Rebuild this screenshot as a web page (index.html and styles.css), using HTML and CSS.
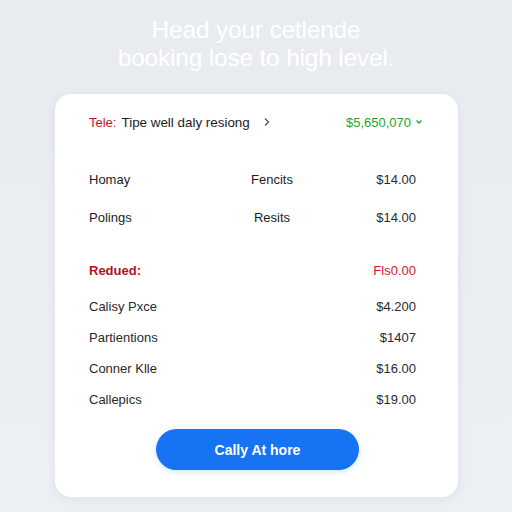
FILE: index.html
```html
<!DOCTYPE html>
<html>
<head>
<meta charset="utf-8">
<link rel="stylesheet" href="styles.css">
</head>
<body>
<div class="page">
  <h1 class="title">Head your cetlende<br>booking lose to high level.</h1>
  <div class="card">
    <div class="head">
      <div class="head-left">
        <span class="tag">Tele:</span>
        <span class="head-text">Tipe well daly resiong</span>
        <svg class="chev" width="8" height="10" viewBox="0 0 8 10"><path d="M2 1.5 L5.5 5 L2 8.5" fill="none" stroke="#555" stroke-width="1.3"/></svg>
      </div>
      <div class="head-right">
        <span class="total">$5,650,070</span>
        <svg class="down" width="8" height="6" viewBox="0 0 8 6"><path d="M1.5 1.5 L4 4 L6.5 1.5" fill="none" stroke="#22a52a" stroke-width="1.3"/></svg>
      </div>
    </div>
    <div class="grid-row"><span>Homay</span><span class="mid">Fencits</span><span class="amt">$14.00</span></div>
    <div class="grid-row"><span>Polings</span><span class="mid">Resits</span><span class="amt">$14.00</span></div>
    <div class="reduced"><span class="red-label">Redued:</span><span class="red-amt">Fls0.00</span></div>
    <div class="list">
      <div class="item"><span>Calisy Pxce</span><span class="amt">$4.200</span></div>
      <div class="item"><span>Partientions</span><span class="amt">$1407</span></div>
      <div class="item"><span>Conner Klle</span><span class="amt">$16.00</span></div>
      <div class="item"><span>Callepics</span><span class="amt">$19.00</span></div>
    </div>
    <div class="actions"><button class="btn">Cally At hore</button></div>
  </div>
</div>
</body>
</html>
```

FILE: styles.css
```css
* { box-sizing: border-box; }
html, body { margin: 0; padding: 0; }
body {
  width: 512px;
  height: 512px;
  background: linear-gradient(180deg, #e8ecf0 0%, #eceff3 100%);
  font-family: "Liberation Sans", Arial, sans-serif;
  color: #1c1c1c;
  overflow: hidden;
}
.page {
  display: flex;
  flex-direction: column;
  align-items: center;
  padding-top: 16px;
}
.title {
  margin: 0;
  font-weight: 400;
  font-size: 24.5px;
  line-height: 28px;
  color: #ffffff;
  text-align: center;
  letter-spacing: -0.2px;
}
.card {
  margin-top: 22px;
  width: 403px;
  margin-left: 1px;
  background: #ffffff;
  border-radius: 16px;
  box-shadow: 0 2px 10px rgba(120, 130, 145, 0.12);
  padding: 16px 35px 27px 34px;
  display: flex;
  flex-direction: column;
}
.head {
  height: 24px;
  display: flex;
  align-items: center;
  justify-content: space-between;
  font-size: 13px;
}
.head-left { display: flex; align-items: center; }
.tag { color: #c0182c; margin-right: 5px; }
.head-text { color: #1c1c1c; font-size: 13.4px; }
.chev { margin-left: 13px; }
.head-right { display: flex; align-items: center; padding-left: 2px; }
.total { color: #22a52a; }
.down { margin-left: 4px; }
.grid-row {
  height: 38px;
  display: grid;
  grid-template-columns: 143px 80px 1fr;
  align-items: center;
  font-size: 13px;
  padding-right: 7px;
}
.head + .grid-row { margin-top: 26px; }
.mid { text-align: center; }
.amt { text-align: right; color: #2a2a2a; }
.reduced {
  margin-top: 15px;
  height: 38px;
  display: flex;
  align-items: center;
  justify-content: space-between;
  font-size: 13px;
  padding-right: 7px;
}
.red-label { color: #b5111f; font-weight: 700; }
.red-amt { color: #d0192e; }
.list { margin-top: 2px; display: flex; flex-direction: column; }
.item {
  height: 31px;
  display: flex;
  align-items: center;
  justify-content: space-between;
  font-size: 13px;
  color: #2a2a2a;
  padding-right: 7px;
}
.actions {
  margin-top: 14px;
  display: flex;
  justify-content: center;
  padding-left: 3px;
}
.btn {
  width: 203px;
  height: 41px;
  border: none;
  border-radius: 21px;
  background: #1673f2;
  color: #ffffff;
  font-family: "Liberation Sans", Arial, sans-serif;
  font-size: 14px;
  font-weight: 700;
  box-shadow: 0 2px 6px rgba(22, 115, 242, 0.18);
}
```
